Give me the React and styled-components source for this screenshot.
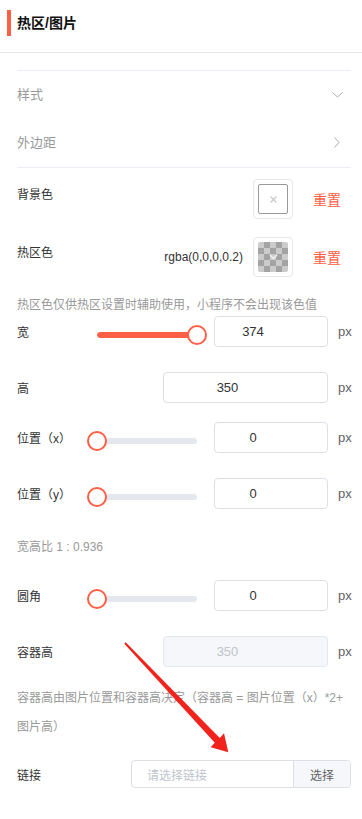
import React from "react";
import styled, { createGlobalStyle } from "styled-components";

const ACCENT = "#ff5f45";

const GlobalStyle = createGlobalStyle`
  html, body { margin: 0; padding: 0; background: #fff; }
  body {
    font-family: "Liberation Sans", "Noto Sans CJK SC", sans-serif;
    -webkit-font-smoothing: antialiased;
  }
  * { box-sizing: border-box; }
`;

const Page = styled.div`
  position: relative;
  width: 362px;
  min-height: 819px;
  background: #fff;
`;

const Header = styled.div`
  display: flex;
  align-items: center;
  padding: 10px 0 16px 7px;
  border-bottom: 1px solid #e6e6e6;
`;

const AccentBar = styled.span`
  width: 4px;
  height: 26px;
  background: ${ACCENT};
  margin-right: 6px;
`;

const Title = styled.h1`
  margin: 0;
  font-size: 14px;
  line-height: 26px;
  font-weight: 700;
  color: #111;
`;

const Body = styled.div`
  padding: 0 11px 0 17px;
`;

const CollapseGroup = styled.div`
  margin-top: 17px;
  border-top: 1px solid #ebeef5;
  border-bottom: 1px solid #ebeef5;
`;

const CollapseRow = styled.div`
  height: 48px;
  padding-bottom: 3px;
  display: flex;
  align-items: center;
  justify-content: space-between;
  font-size: 13px;
  color: #999;
`;

const ChevronBox = styled.span`
  display: flex;
  width: 12px;
  height: 12px;
  margin: 2px 8px 0 0;
  align-items: center;
  justify-content: center;
`;

const ColorRow = styled.div`
  display: flex;
  align-items: center;
  margin-top: ${(p) => p.$mt}px;
`;

const RowLabel = styled.div`
  flex: 1;
  font-size: 12px;
  color: #333;
  align-self: ${(p) => (p.$top ? "flex-start" : "center")};
  line-height: ${(p) => (p.$top ? "32px" : "normal")};
`;

const ColorValue = styled.span`
  font-size: 12px;
  color: #333;
  margin-right: 10px;
`;

const Swatch = styled.div`
  width: 40px;
  height: 40px;
  border: 1px solid #e6e6e6;
  border-radius: 4px;
  padding: 4px;
`;

const SwatchInner = styled.div`
  width: 30px;
  height: 30px;
  border-radius: 2px;
  display: flex;
  align-items: center;
  justify-content: center;
  border: ${(p) => (p.$checker ? "none" : "1px solid #999")};
  background: ${(p) =>
    p.$checker
      ? "conic-gradient(#a3a3a3 25%, #cbcbcb 0 50%, #a3a3a3 0 75%, #cbcbcb 0) 0 0 / 12px 12px"
      : "#fff"};
`;

const ResetLink = styled.span`
  font-size: 14px;
  color: ${ACCENT};
  margin: 0 10px 0 20px;
  cursor: pointer;
`;

const Note = styled.div`
  font-size: 12px;
  color: #999;
  line-height: ${(p) => p.$lh || 17}px;
  margin-top: ${(p) => p.$mt}px;
  margin-right: ${(p) => (p.$wide ? -11 : 0)}px;
`;

const FieldRow = styled.div`
  display: flex;
  align-items: center;
  height: 31px;
  margin-top: ${(p) => p.$mt}px;
`;

const SliderWrap = styled.div`
  position: relative;
  width: 120px;
  height: 20px;
  margin: 6px 7px 0 0;
`;

const Track = styled.div`
  position: absolute;
  left: 10px;
  right: 10px;
  top: 7px;
  height: 6px;
  border-radius: 3px;
  background: #e4e7ed;
  overflow: hidden;
`;

const TrackFill = styled.div`
  height: 100%;
  background: ${ACCENT};
  border-radius: 3px;
`;

const Knob = styled.div`
  position: absolute;
  top: 0;
  width: 20px;
  height: 20px;
  border-radius: 50%;
  border: 2px solid ${ACCENT};
  background: #fff;
`;

const NumberInput = styled.input`
  width: ${(p) => (p.$wide ? 165 : 114)}px;
  height: 31px;
  border: 1px solid ${(p) => (p.disabled ? "#e4e7ed" : "#dcdfe6")};
  border-radius: 4px;
  background: ${(p) => (p.disabled ? "#f5f7fa" : "#fff")};
  color: ${(p) => (p.disabled ? "#c0c4cc" : "#333")};
  font-family: "Liberation Sans", sans-serif;
  font-size: 13px;
  text-align: center;
  padding: 0 36px 0 0;
  outline: none;
`;

const Unit = styled.span`
  margin-left: 10px;
  width: 13px;
  font-size: 13px;
  color: #606266;
`;

const LinkRow = styled.div`
  display: flex;
  align-items: center;
  height: 28px;
  margin-top: 18px;
`;

const InputGroup = styled.div`
  display: flex;
  width: 220px;
  height: 28px;
  border: 1px solid #dcdfe6;
  border-radius: 4px;
  overflow: hidden;
`;

const Placeholder = styled.div`
  flex: 1;
  display: flex;
  align-items: center;
  padding-left: 15px;
  font-size: 12px;
  color: #c0c4cc;
`;

const GroupButton = styled.div`
  width: 57px;
  display: flex;
  align-items: center;
  justify-content: center;
  background: #f5f7fa;
  border-left: 1px solid #dcdfe6;
  font-size: 12px;
  color: #606266;
`;

const ArrowLayer = styled.svg`
  position: absolute;
  left: 0;
  top: 0;
  pointer-events: none;
`;

function Slider({ value }) {
  return (
    <SliderWrap>
      <Track>
        <TrackFill style={{ width: `${value}%` }} />
      </Track>
      <Knob style={{ left: `${value}px` }} />
    </SliderWrap>
  );
}

function Field({ label, mt, slider, value, wide, disabled }) {
  return (
    <FieldRow $mt={mt}>
      <RowLabel>{label}</RowLabel>
      {slider !== undefined && <Slider value={slider} />}
      <NumberInput $wide={wide} disabled={disabled} value={value} readOnly />
      <Unit>px</Unit>
    </FieldRow>
  );
}

const ChevronDown = () => (
  <svg width="11" height="6" viewBox="0 0 11 6">
    <path d="M0.5 0.5 L5.5 5 L10.5 0.5" fill="none" stroke="#aaa" strokeWidth="1" />
  </svg>
);

const ChevronRight = () => (
  <svg width="6" height="11" viewBox="0 0 6 11">
    <path d="M0.5 0.5 L5 5.5 L0.5 10.5" fill="none" stroke="#aaa" strokeWidth="1" />
  </svg>
);

export default function App() {
  return (
    <Page>
      <GlobalStyle />
      <Header>
        <AccentBar />
        <Title>热区/图片</Title>
      </Header>
      <Body>
        <CollapseGroup>
          <CollapseRow>
            <span>样式</span>
            <ChevronBox>
              <ChevronDown />
            </ChevronBox>
          </CollapseRow>
          <CollapseRow>
            <span>外边距</span>
            <ChevronBox>
              <ChevronRight />
            </ChevronBox>
          </CollapseRow>
        </CollapseGroup>

        <ColorRow $mt={11}>
          <RowLabel $top>背景色</RowLabel>
          <Swatch>
            <SwatchInner>
              <svg width="7" height="7" viewBox="0 0 7 7">
                <path d="M0.5 0.5 L6.5 6.5 M6.5 0.5 L0.5 6.5" stroke="#c8c8c8" strokeWidth="1.2" />
              </svg>
            </SwatchInner>
          </Swatch>
          <ResetLink>重置</ResetLink>
        </ColorRow>

        <ColorRow $mt={18}>
          <RowLabel $top>热区色</RowLabel>
          <ColorValue>rgba(0,0,0,0.2)</ColorValue>
          <Swatch>
            <SwatchInner $checker>
              <svg width="9" height="6" viewBox="0 0 9 6">
                <path d="M1 1 L4.5 4.5 L8 1" fill="none" stroke="#f2f2f2" strokeWidth="1.4" />
              </svg>
            </SwatchInner>
          </Swatch>
          <ResetLink>重置</ResetLink>
        </ColorRow>

        <Note $mt={20}>热区色仅供热区设置时辅助使用，小程序不会出现该色值</Note>

        <Field label="宽" mt={2} slider={100} value="374" />
        <Field label="高" mt={25} value="350" wide />
        <Field label="位置（x）" mt={19} slider={0} value="0" />
        <Field label="位置（y）" mt={25} slider={0} value="0" />

        <Note $mt={30}>宽高比 1 : 0.936</Note>

        <Field label="圆角" mt={24} slider={0} value="0" />
        <Field label="容器高" mt={25} value="350" wide disabled />

        <Note $mt={17} $lh={29} $wide>
          容器高由图片位置和容器高决定（容器高 = 图片位置（x）*2+
          <br />
          图片高）
        </Note>

        <LinkRow>
          <RowLabel>链接</RowLabel>
          <InputGroup>
            <Placeholder>请选择链接</Placeholder>
            <GroupButton>选择</GroupButton>
          </InputGroup>
        </LinkRow>
      </Body>

      <ArrowLayer width="362" height="819" viewBox="0 0 362 819">
        <polygon
          points="125.7,642.3 219.8,737.9 224,733.3 228.3,752.3 210.7,747.3 214.8,742.7 124.3,643.7"
          fill="#f2231c"
        />
      </ArrowLayer>
    </Page>
  );
}
